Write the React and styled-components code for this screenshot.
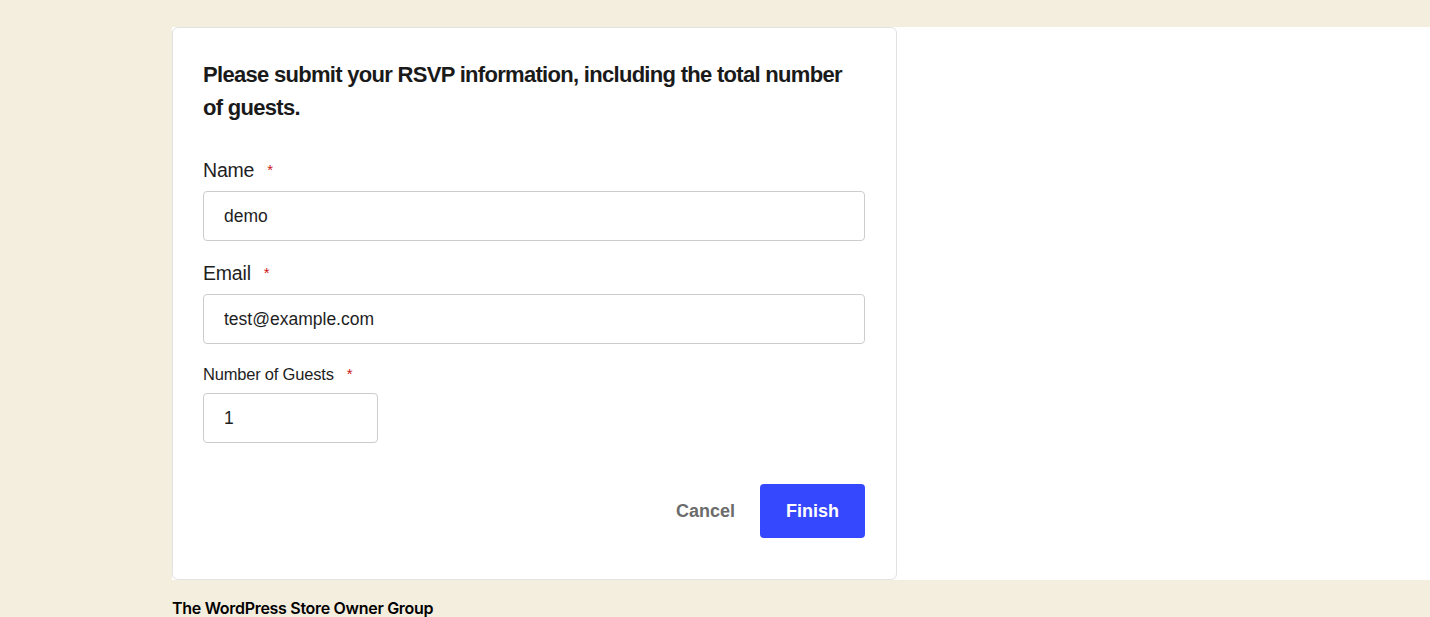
import React from "react";
import styled, { createGlobalStyle } from "styled-components";

const GlobalStyle = createGlobalStyle`
  html, body {
    margin: 0;
    padding: 0;
    background: #f4eedf;
  }
  * {
    box-sizing: border-box;
  }
`;

const fields = [
  { label: "Name", value: "demo", big: true },
  { label: "Email", value: "test@example.com", big: true },
  { label: "Number of Guests", value: "1", big: false },
];

const App = () => {
  return (
    <>
      <GlobalStyle />
      <Page>
        <Band>
          <Card>
            <Heading>
              Please submit your RSVP information, including the total number
              of guests.
            </Heading>
            <Form>
              {fields.map((f) => (
                <Field key={f.label}>
                  <Label big={f.big}>
                    {f.label}
                    <Star>*</Star>
                  </Label>
                  <Input defaultValue={f.value} narrow={!f.big} readOnly />
                </Field>
              ))}
            </Form>
            <Actions>
              <CancelButton>Cancel</CancelButton>
              <FinishButton>Finish</FinishButton>
            </Actions>
          </Card>
        </Band>
        <Footer>The WordPress Store Owner Group</Footer>
      </Page>
    </>
  );
};

const Page = styled.div`
  padding-top: 27px;
  padding-left: 172px;
  min-height: 617px;
`;
const Band = styled.div`
  background: #ffffff;
  height: 553px;
  display: flex;
`;
const Card = styled.div`
  width: 725px;
  height: 553px;
  border: 1px solid #e2e2e2;
  border-radius: 6px;
  padding: 30px 31px 0 30px;
  display: flex;
  flex-direction: column;
`;
const Heading = styled.h2`
  margin: 0;
  font-family: "Liberation Sans", Arial, sans-serif;
  font-weight: 700;
  font-size: 22px;
  line-height: 33px;
  letter-spacing: -0.7px;
  color: #1a1a1a;
`;
const Form = styled.div`
  display: flex;
  flex-direction: column;
  gap: 21px;
  margin-top: 35px;
`;
const Field = styled.div`
  display: flex;
  flex-direction: column;
`;
const Label = styled.label`
  font-family: "Liberation Sans", Arial, sans-serif;
  font-size: ${(p) => (p.big ? "19.5px" : "16.5px")};
  line-height: ${(p) => (p.big ? "22px" : "18px")};
  color: #1e1e1e;
  margin-bottom: 10px;
  letter-spacing: -0.2px;
`;
const Star = styled.span`
  color: #cc1818;
  font-size: 15px;
  margin-left: 13px;
  vertical-align: top;
`;
const Input = styled.input`
  width: ${(p) => (p.narrow ? "175px" : "100%")};
  height: 50px;
  border: 1px solid #cccccc;
  border-radius: 4px;
  padding: 0 20px;
  font-family: "Liberation Sans", Arial, sans-serif;
  font-size: 17.5px;
  color: #1e1e1e;
  outline: none;
`;
const Actions = styled.div`
  display: flex;
  justify-content: flex-end;
  align-items: center;
  gap: 25px;
  margin-top: 41px;
`;
const CancelButton = styled.button`
  background: none;
  border: none;
  padding: 0;
  font-family: "Liberation Sans", Arial, sans-serif;
  font-weight: 700;
  font-size: 18px;
  color: #6b6b6b;
  cursor: pointer;
`;
const FinishButton = styled.button`
  width: 105px;
  height: 54px;
  background: #3548fe;
  border: none;
  border-radius: 4px;
  font-family: "Liberation Sans", Arial, sans-serif;
  font-weight: 700;
  font-size: 18px;
  color: #ffffff;
  cursor: pointer;
`;
const Footer = styled.div`
  margin-top: 18px;
  font-family: Inter, sans-serif;
  font-weight: 600;
  font-size: 16px;
  line-height: 20px;
  letter-spacing: -0.3px;
  color: #000000;
`;

export default App;
